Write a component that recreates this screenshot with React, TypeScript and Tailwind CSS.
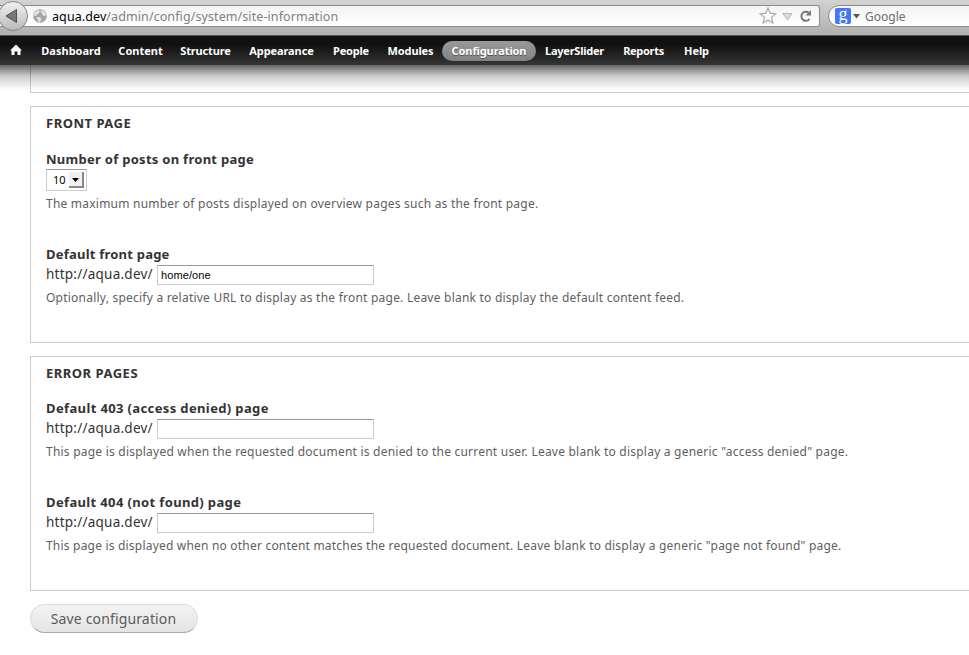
import React from "react";

const menu = [
  { label: "Dashboard", cls: "w-[58px] ml-[20px]" },
  { label: "Content", cls: "w-[43px] ml-[19px]" },
  { label: "Structure", cls: "w-[49px] ml-[19px] tracking-[-0.15px]" },
  { label: "Appearance", cls: "w-[63px] ml-[20px] tracking-[-0.1px]" },
  { label: "People", cls: "w-[36px] ml-[20px] tracking-[-0.2px]" },
  { label: "Modules", cls: "w-[45px] ml-[19px] tracking-[-0.1px]" },
  { label: "Configuration", cls: "w-[94px] ml-[9px] tracking-[-0.1px]", active: true },
  { label: "LayerSlider", cls: "w-[59px] ml-[9px] tracking-[-0.25px]" },
  { label: "Reports", cls: "w-[41px] ml-[19px] tracking-[-0.3px]" },
  { label: "Help", cls: "w-[25px] ml-[20px] tracking-[-0.1px]" },
];

function BrowserBar() {
  return (
    <div className="relative flex h-[36px] items-start border-b border-[#555] bg-gradient-to-b from-[#d2d2d2] to-[#b0b0b0] pt-[5px]">
      <div className="flex h-[22px] w-[820px] shrink-0 items-center rounded-r-[3px] border border-l-0 border-[#8b8b8b] bg-gradient-to-b from-[#f4f4f4] to-white pl-[33px]">
        <svg width="14" height="14" viewBox="0 0 14 14" className="shrink-0">
          <circle cx="7" cy="7" r="6.8" fill="#a5a5a5" />
          <path d="M2 3.2 5.2 1l1.6 1-1 2.2-2 1-.8 2-2-.4A7 7 0 0 1 2 3.200ZM8.300 1.200l3 1.400 1.700 3-1 1.500-2.200-.6-.9-2.500-1.500-1ZM4 8l3 .3 1.500 1.800-1.800 3.100-1.200-.2-.4-2.600L3.500 9Z" fill="#e5e5e5" />
        </svg>
        <div className="ml-[5px] mt-px flex w-[290px] whitespace-pre text-[12.5px] leading-5">
          <span className="tracking-[0.09px] text-black">aqua.dev</span>
          <span className="tracking-[0.09px] text-[#808080]">/admin/config/system/site-information</span>
        </div>
        <svg width="62" height="20" viewBox="0 0 62 20" className="ml-auto shrink-0">
          <path d="m11 2 2.200 5.200 5.600.5-4.300 3.700 1.400 5.500-4.900-3-4.900 3 1.400-5.500-4.300-3.700 5.600-.5Z" fill="#fafafa" stroke="#a9a9a9" strokeWidth="1.200" />
          <path d="M26 7.500h9l-4.500 6.500Z" fill="#ddd" stroke="#b4b4b4" />
          <path d="M52.500 13a4.500 4.500 0 1 1-.6-6" fill="none" stroke="#777" strokeWidth="2" />
          <path d="M54 4v5.500H48.500Z" fill="#777" />
        </svg>
      </div>
      <div className="ml-[8px] flex h-[22px] w-[160px] shrink-0 items-center rounded-l-full border border-[#8b8b8b] bg-gradient-to-b from-[#f4f4f4] to-white pl-[6px]">
        <div className="flex h-4 w-4 shrink-0 items-center justify-center rounded-[2px] bg-[#4377f5] pb-[5px] font-['Liberation_Serif',serif] text-[18px] leading-none text-white">g</div>
        <svg width="7" height="5" className="ml-[2px]"><path d="M0 0h7L3.500 4.500Z" fill="#555" /></svg>
        <span className="ml-[5px] mt-px text-[12px] text-[#6d6d6d]">Google</span>
      </div>
      <svg width="29" height="32" viewBox="0 0 29 32" className="absolute left-0 top-0">
        <defs>
          <linearGradient id="back" x1="0" x2="0" y1="0" y2="1">
            <stop stopColor="#f2f2f2" /><stop offset="1" stopColor="#b9b9b9" />
          </linearGradient>
        </defs>
        <circle cx="13" cy="16" r="14.500" fill="url(#back)" stroke="#858585" />
        <path d="M6 16 16.500 9.500v13Z" fill="#777" stroke="#505050" />
      </svg>
    </div>
  );
}

function AdminMenu() {
  return (
    <nav className="relative flex h-[29px] items-center bg-gradient-to-b from-[#111] from-30% to-[#363636] pl-[10px] text-[11px] font-bold text-white">
      <svg width="12" height="12" viewBox="0 0 12 12" className="mb-[2px] shrink-0">
        <path d="M6 .5 0 6.500h1.500V11h3V7.500h3V11h3V6.500H12Z" fill="#fff" />
      </svg>
      {menu.map((m) => (
        <div key={m.label} className={m.cls + " flex h-5 shrink-0 items-center justify-center whitespace-nowrap pt-px " + (m.active ? "rounded-full bg-gradient-to-b from-[#999] to-[#828282] [text-shadow:0_1px_0_#555]" : "")}>
          {m.label}
        </div>
      ))}
      <div className="absolute left-0 top-full h-[25px] w-full bg-gradient-to-b from-black/60 via-black/20 via-45% to-transparent" />
    </nav>
  );
}

function UrlRow({ value }: { value: string }) {
  return (
    <div className="flex h-5 items-center">
      <span className="mb-[2px] w-[111px] whitespace-nowrap text-[13.5px] leading-5 tracking-[0.24px] text-[#333]">http://aqua.dev/</span>
      <input readOnly value={value} className="h-5 w-[217px] border border-[#ccc] border-t-[#999] bg-white px-[3px] font-['Liberation_Sans',sans-serif] text-[11px] tracking-[0.1px] text-black outline-none" />
    </div>
  );
}

const legend = "h-5 whitespace-nowrap text-[13px] leading-5 font-bold tracking-[0.5px]";
const label = "h-5 whitespace-nowrap text-[13px] leading-5 font-bold";
const desc = "h-5 whitespace-nowrap text-[12px] leading-5 text-[#606060]";

export default function App() {
  return (
    <div className="h-[655px] w-[969px] overflow-hidden bg-white font-['Noto_Sans',sans-serif] text-[#333]">
      <BrowserBar />
      <AdminMenu />
      <main className="flex w-[1000px] flex-col pl-[30px]">
        <div className="h-[28px] border-b border-l border-[#ccc]" />
        <section className="mt-[13px] h-[237px] border border-[#ccc] pl-[15px] pt-[6px]">
          <h2 className={legend}>FRONT PAGE</h2>
          <div className={label + " mt-4 tracking-[0.28px]"}>Number of posts on front page</div>
          <div className="flex h-[22px] w-[41px] items-center justify-between border border-[#ccc] border-t-[#999] pl-[6px] pr-[2px] text-[11px] text-black">
            <span>10</span>
            <span className="flex h-4 w-[15px] items-center justify-center border-b-2 border-r-2 border-[#888] bg-[#f0f0f0] pt-px">
              <svg width="7" height="4"><path d="M0 0h7L3.500 4Z" /></svg>
            </span>
          </div>
          <p className={desc + " mt-[3px] tracking-[0.223px]"}>The maximum number of posts displayed on overview pages such as the front page.</p>
          <div className={label + " mt-[30px] tracking-[0.22px]"}>Default front page</div>
          <div className="mt-px"><UrlRow value="home/one" /></div>
          <p className={desc + " mt-[3px] tracking-[0.225px]"}>Optionally, specify a relative URL to display as the front page. Leave blank to display the default content feed.</p>
        </section>
        <section className="mt-[13px] h-[235px] border border-[#ccc] pl-[15px] pt-[6px]">
          <h2 className={legend}>ERROR PAGES</h2>
          <div className={label + " mb-px mt-[15px] tracking-[0.37px]"}>Default 403 (access denied) page</div>
          <UrlRow value="" />
          <p className={desc + " mt-[3px] tracking-[0.223px]"}>This page is displayed when the requested document is denied to the current user. Leave blank to display a generic "access denied" page.</p>
          <div className={label + " mb-px mt-[30px] tracking-[0.36px]"}>Default 404 (not found) page</div>
          <UrlRow value="" />
          <p className={desc + " mt-[3px] tracking-[0.2px]"}>This page is displayed when no other content matches the requested document. Leave blank to display a generic "page not found" page.</p>
        </section>
        <button className="mt-[13px] h-[29px] w-[168px] whitespace-nowrap rounded-full border border-[#dcdcdc] border-b-[#aaa] bg-gradient-to-b from-[#f3f3f3] to-[#e4e4e4] pr-[1px] text-[14px] tracking-[0.15px] text-[#5a5a5a]">Save configuration</button>
      </main>
    </div>
  );
}
